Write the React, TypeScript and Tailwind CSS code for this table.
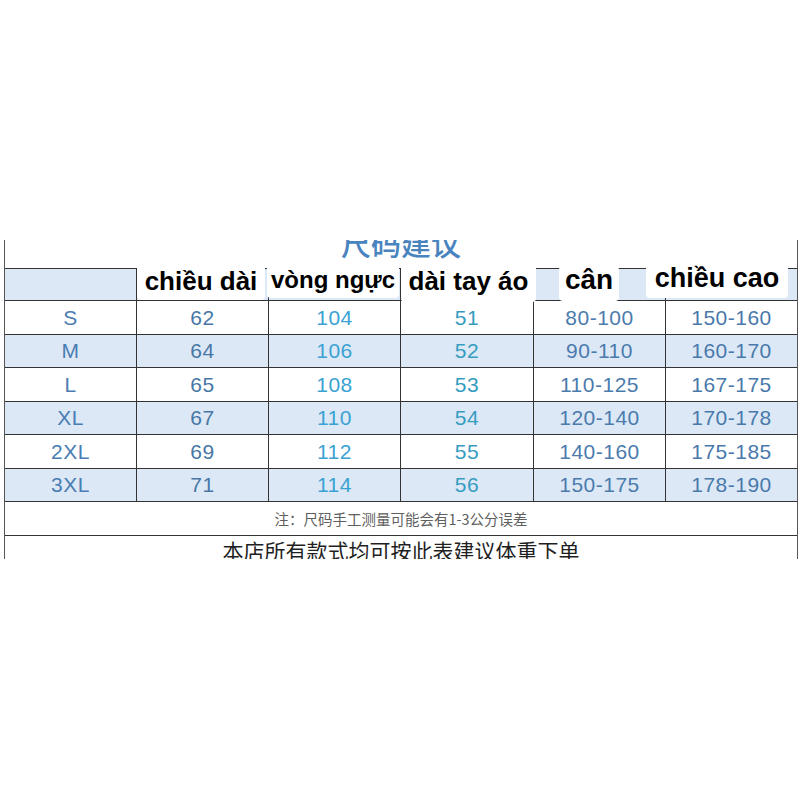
import React from "react";

const rows = [
  ["S", "62", "104", "51", "80-100", "150-160"],
  ["M", "64", "106", "52", "90-110", "160-170"],
  ["L", "65", "108", "53", "110-125", "167-175"],
  ["XL", "67", "110", "54", "120-140", "170-178"],
  ["2XL", "69", "112", "55", "140-160", "175-185"],
  ["3XL", "71", "114", "56", "150-175", "178-190"],
];

const colColors = [
  "text-[#4a7db3]",
  "text-[#4877a6]",
  "text-[#3aa2d3]",
  "text-[#369cc0]",
  "text-[#4b7bad]",
  "text-[#4979ab]",
];

const stickers = [
  { label: "chiều dài", cls: "left-[132px] top-[22px] w-[128px] h-[38px] text-[26px] pt-[6px]" },
  { label: "vòng ngực", cls: "left-[262px] top-[23px] w-[132px] h-[35px] text-[24px] pt-[5px]" },
  { label: "dài tay áo", cls: "left-[396px] top-[24px] w-[135px] h-[38px] text-[26px] pt-[4px]" },
  { label: "cân", cls: "left-[554px] top-[26px] w-[60px] h-[35px] text-[28px] pt-[0px]" },
  { label: "chiều cao", cls: "left-[641px] top-[20px] w-[142px] h-[38px] text-[27px] pt-[5px]" },
];

const grid = "grid grid-cols-[132px_132px_132px_133px_132px_1fr]";

export default function App() {
  return (
    <div className="w-[800px] h-[800px] bg-white overflow-hidden">
      <div className="h-[240px]" />
      <div className="relative ml-[4px] w-[794px] h-[319px] overflow-hidden border-l border-r border-[#555]">
        {/* title row */}
        <div className="h-[28px] flex justify-center">
          <div
            className="mt-[-13px] text-[30px] leading-none font-medium text-[#4a84bf]"
            style={{ fontFamily: '"Noto Sans CJK SC", sans-serif' }}
          >
            尺码建议
          </div>
        </div>
        {/* header */}
        <div className={`${grid} h-[33px] border-t border-b border-[#333] bg-[#dce8f5]`}>
          {Array.from({ length: 6 }).map((_, i) => (
            <div key={i} className={i < 5 ? "border-r border-[#333]" : ""} />
          ))}
        </div>
        {/* data rows */}
        {rows.map((r, ri) => (
          <div
            key={ri}
            className={`${grid} ${ri % 2 === 0 ? "h-[34px] bg-white" : "h-[33px] bg-[#dce8f5]"} border-b border-[#333]`}
          >
            {r.map((c, ci) => (
              <div
                key={ci}
                className={`${ci < 5 ? "border-r border-[#333]" : ""} flex items-center justify-center text-[21px] tracking-[0.5px] ${colColors[ci]}`}
                style={{ fontFamily: '"Liberation Sans", Arial, sans-serif' }}
              >
                {c}
              </div>
            ))}
          </div>
        ))}
        {/* note row */}
        <div
          className="h-[34px] border-b border-[#333] flex items-center justify-center text-[14.5px] text-[#5f5f5f]"
          style={{ fontFamily: '"Noto Sans CJK SC", sans-serif' }}
        >
          注：尺码手工测量可能会有1-3公分误差
        </div>
        {/* last row */}
        <div
          className="flex justify-center text-[21px] leading-none text-[#1f1f1f]"
          style={{ fontFamily: '"Noto Sans CJK SC", sans-serif' }}
        >
          <span className="mt-[4px]">本店所有款式均可按此表建议体重下单</span>
        </div>

        {/* stickers overlaid on header */}
        {stickers.map((s, i) => (
          <div
            key={i}
            className={`absolute ${s.cls} bg-white rounded-[4px] flex justify-center items-start leading-none font-bold text-black whitespace-nowrap`}
            style={{ fontFamily: '"Liberation Sans", Arial, sans-serif' }}
          >
            {s.label}
          </div>
        ))}
      </div>
    </div>
  );
}
